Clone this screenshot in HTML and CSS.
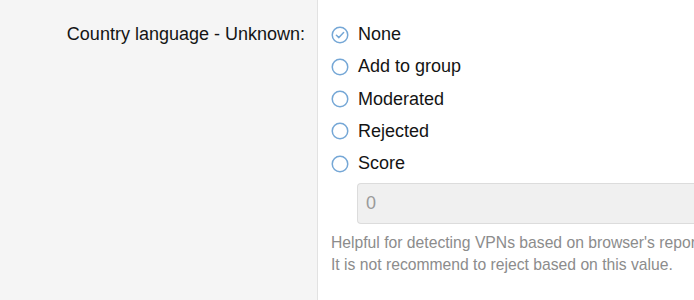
FILE: index.html
```html
<!DOCTYPE html>
<html>
<head>
<meta charset="utf-8">
<link rel="stylesheet" href="styles.css">
</head>
<body>
<div class="form-row">
  <div class="label-col">
    <label class="row-label">Country language - Unknown:</label>
  </div>
  <div class="input-col">
    <ul class="radio-list">
      <li class="radio-item">
        <svg class="radio-icon" viewBox="0 0 18 18" width="18" height="18"><circle cx="9" cy="9" r="7.75" fill="#fff" stroke="#75a7d6" stroke-width="1.5"/><path d="M5.4 9.2 L7.9 11.6 L12.6 6.6" fill="none" stroke="#75a7d6" stroke-width="1.5" stroke-linecap="round" stroke-linejoin="round"/></svg>
        <span>None</span>
      </li>
      <li class="radio-item">
        <svg class="radio-icon" viewBox="0 0 18 18" width="18" height="18"><circle cx="9" cy="9" r="7.75" fill="#fff" stroke="#75a7d6" stroke-width="1.5"/></svg>
        <span>Add to group</span>
      </li>
      <li class="radio-item">
        <svg class="radio-icon" viewBox="0 0 18 18" width="18" height="18"><circle cx="9" cy="9" r="7.75" fill="#fff" stroke="#75a7d6" stroke-width="1.5"/></svg>
        <span>Moderated</span>
      </li>
      <li class="radio-item">
        <svg class="radio-icon" viewBox="0 0 18 18" width="18" height="18"><circle cx="9" cy="9" r="7.75" fill="#fff" stroke="#75a7d6" stroke-width="1.5"/></svg>
        <span>Rejected</span>
      </li>
      <li class="radio-item">
        <svg class="radio-icon" viewBox="0 0 18 18" width="18" height="18"><circle cx="9" cy="9" r="7.75" fill="#fff" stroke="#75a7d6" stroke-width="1.5"/></svg>
        <span>Score</span>
      </li>
    </ul>
    <div class="score-box">
      <input class="score-input" type="text" value="0" disabled>
    </div>
    <p class="help-text">Helpful for detecting VPNs based on browser's reported language.<br>It is not recommend to reject based on this value.</p>
  </div>
</div>
</body>
</html>
```
FILE: styles.css
```css
html, body {
  margin: 0;
  padding: 0;
  height: 100%;
  overflow: hidden;
}
body {
  font-family: "Liberation Sans", Arial, sans-serif;
  color: #141414;
  background: #fff;
}
.form-row {
  display: flex;
  min-height: 300px;
}
.label-col {
  flex: none;
  background: #f5f5f5;
  border-right: 1px solid #e2e2e2;
  box-sizing: border-box;
  width: 318px;
  text-align: right;
  padding: 24px 12px 0 0;
}
.row-label {
  font-size: 18px;
  line-height: 21px;
}
.input-col {
  flex: 1;
  padding: 24px 0 0 13px;
  min-width: 0;
  overflow: hidden;
}
.radio-list {
  list-style: none;
  margin: 0;
  padding: 0;
  display: flex;
  flex-direction: column;
  gap: 11.25px;
}
.radio-item {
  display: flex;
  align-items: center;
  gap: 9px;
  font-size: 18px;
  line-height: 21px;
}
.radio-icon {
  flex: none;
}
.score-box {
  padding: 9px 0 0 26px;
}
.score-input {
  display: block;
  width: 100%;
  box-sizing: border-box;
  height: 41px;
  border: 1px solid #dcdcdc;
  border-right: none;
  border-radius: 4px 0 0 4px;
  background: #f0f0f0;
  font-family: "Liberation Sans", Arial, sans-serif;
  font-size: 18px;
  color: #9a9a9a;
  padding: 0 8px;
  -webkit-text-fill-color: #9a9a9a;
  opacity: 1;
}
.help-text {
  margin: 8px 0 0;
  font-size: 15.7px;
  line-height: 22px;
  color: #8c8c8c;
  white-space: nowrap;
}
```
